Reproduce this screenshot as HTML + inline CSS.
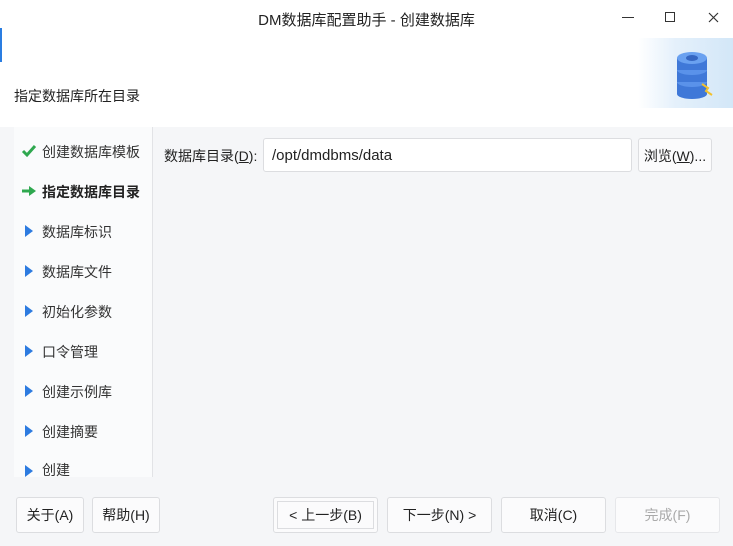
<!DOCTYPE html>
<html><head><meta charset="utf-8"><style>
*{margin:0;padding:0;box-sizing:border-box}
body{width:733px;height:546px;overflow:hidden;background:#f5f6f8;font-family:"Liberation Sans","Noto Sans CJK SC",sans-serif;color:#222;position:relative;font-size:14px}
.abs{position:absolute}
.btn{position:absolute;top:497px;height:36px;background:#fbfbfc;border:1px solid #dcdde0;border-radius:3px;text-align:center;line-height:34px;font-size:14px;color:#222}
.item{position:absolute;left:42px;font-size:14px;color:#333}
.tri{position:absolute;left:25px;width:0;height:0;border-top:6px solid transparent;border-bottom:6px solid transparent;border-left:8px solid #2d7be0}
</style></head><body>
<div class="abs" style="left:0;top:0;width:733px;height:127px;background:#fff"></div>
<div class="abs" style="left:0;top:28px;width:2px;height:34px;background:#2a7de1"></div>
<div class="abs" style="left:0;width:733px;text-align:center;top:9px;font-size:15px;color:#222">DM数据库配置助手 - 创建数据库</div>
<div class="abs" style="left:622px;top:17px;width:12px;height:1px;background:#333"></div>
<div class="abs" style="left:665px;top:12px;width:10px;height:10px;border:1px solid #333"></div>
<svg class="abs" style="left:708px;top:12px" width="11" height="11"><path d="M1 1L10 10M10 1L1 10" stroke="#333" stroke-width="1.2"/></svg>
<div class="abs" style="left:14px;top:86px;font-size:14px">指定数据库所在目录</div>
<div class="abs" style="left:638px;top:38px;width:95px;height:70px;background:linear-gradient(90deg,#fff,#e4f0fb 40%,#d3e7f8)"></div>
<svg class="abs" style="left:672px;top:48px" width="50" height="56" viewBox="0 0 50 56">
<rect x="5" y="34" width="30" height="12" fill="#3f78d8"/><ellipse cx="20" cy="46" rx="15" ry="5" fill="#3f78d8"/><ellipse cx="20" cy="34" rx="15" ry="5" fill="#5a92ea"/>
<rect x="5" y="22" width="30" height="12" fill="#3f78d8"/><ellipse cx="20" cy="22" rx="15" ry="5" fill="#5a92ea"/>
<rect x="5" y="10" width="30" height="12" fill="#3f78d8"/><ellipse cx="20" cy="10" rx="15" ry="6" fill="#6aa1f0"/><ellipse cx="20" cy="10" rx="6" ry="3" fill="#3566c2"/>
<path d="M30 36 L36 40 L34 43 L40 47" stroke="#f2c12e" stroke-width="2" fill="none"/>
</svg>
<div class="abs" style="left:14px;top:127px;width:139px;height:350px;background:#fafbfc;border-right:1px solid #e2e3e6"></div>
<svg class="abs" style="left:21px;top:144px" width="16" height="14"><path d="M2 7 L6 11 L14 2" stroke="#2fa84f" stroke-width="3" fill="none"/></svg>
<div class="item" style="top:142px">创建数据库模板</div>
<svg class="abs" style="left:21px;top:184px" width="16" height="14"><path d="M1 7 H10" stroke="#2fa84f" stroke-width="3"/><path d="M8 2 L15 7 L8 12Z" fill="#2fa84f"/></svg>
<div class="item" style="top:182px;font-weight:bold;color:#222">指定数据库目录</div>
<div class="tri" style="top:225px"></div><div class="item" style="top:222px">数据库标识</div>
<div class="tri" style="top:265px"></div><div class="item" style="top:262px">数据库文件</div>
<div class="tri" style="top:305px"></div><div class="item" style="top:302px">初始化参数</div>
<div class="tri" style="top:345px"></div><div class="item" style="top:342px">口令管理</div>
<div class="tri" style="top:385px"></div><div class="item" style="top:382px">创建示例库</div>
<div class="tri" style="top:425px"></div><div class="item" style="top:422px">创建摘要</div>
<div class="abs" style="left:14px;top:455px;width:139px;height:22px;overflow:hidden"><div class="tri" style="top:10px;left:11px"></div><div class="item" style="top:5px;left:28px">创建</div></div>
<div class="abs" style="left:164px;top:146px;font-size:14px">数据库目录(<u>D</u>):</div>
<div class="abs" style="left:263px;top:138px;width:369px;height:34px;background:#fff;border:1px solid #dcdde0;border-radius:3px;padding-left:8px;line-height:34px;font-size:15px">/opt/dmdbms/data</div>
<div class="abs" style="left:638px;top:138px;width:74px;height:34px;background:#fbfbfc;border:1px solid #dcdde0;border-radius:3px;text-align:center;line-height:34px;font-size:14px">浏览(<u>W</u>)...</div>
<div class="btn" style="left:16px;width:68px">关于(A)</div>
<div class="btn" style="left:92px;width:68px">帮助(H)</div>
<div class="btn" style="left:273px;width:105px"><div style="position:absolute;left:3px;top:3px;right:3px;bottom:3px;border:1px solid #dcdde0;line-height:26px">&lt; 上一步(B)</div></div>
<div class="btn" style="left:387px;width:105px">下一步(N) &gt;</div>
<div class="btn" style="left:501px;width:105px">取消(C)</div>
<div class="btn" style="left:615px;width:105px;color:#aaa;border-color:#e6e7ea">完成(F)</div>
</body></html>
